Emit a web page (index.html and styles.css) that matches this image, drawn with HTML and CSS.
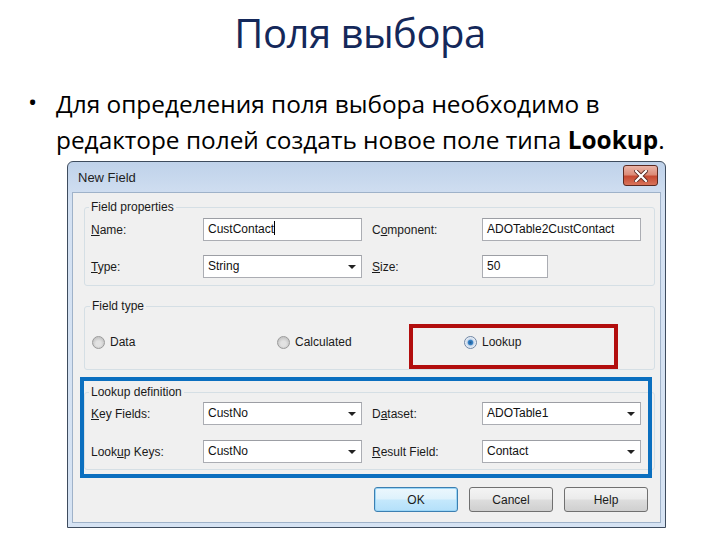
FILE: index.html
```html
<!DOCTYPE html>
<html lang="ru">
<head>
    <meta charset="UTF-8">
    <title>Поля выбора</title>
    <link rel="stylesheet" href="styles.css">
</head>
<body>
    <h1 class="slide-title">Поля выбора</h1>
    <ul class="points">
        <li class="point"><span class="dot">•</span><span class="point-text">Для определения поля выбора необходимо в<br>редакторе полей создать новое поле типа <b>Lookup</b>.</span></li>
    </ul>

    <div class="window">
        <div class="titlebar">
            <span class="caption">New Field</span>
            <span class="close">
                <svg width="14" height="12" viewBox="0 0 14 12">
                    <path d="M2 1 L12 11 M12 1 L2 11" stroke="#5a2a22" stroke-width="4" stroke-linecap="square"/>
                    <path d="M2 1 L12 11 M12 1 L2 11" stroke="#ffffff" stroke-width="2.2" stroke-linecap="square"/>
                </svg>
            </span>
        </div>
        <div class="client">
            <fieldset class="group props">
                <legend>Field properties</legend>
                <label><u>N</u>ame:</label>
                <div class="edit">CustContact<span class="caret"></span></div>
                <label>C<u>o</u>mponent:</label>
                <div class="edit">ADOTable2CustContact</div>
                <label><u>T</u>ype:</label>
                <div class="edit combo">String<span class="arrow"></span></div>
                <label><u>S</u>ize:</label>
                <div class="edit short">50</div>
            </fieldset>

            <fieldset class="group kind">
                <legend>Field type</legend>
                <div class="radio"><span class="knob"></span>Data</div>
                <div class="radio"><span class="knob"></span>Calculated</div>
                <div class="radio"><span class="knob on"></span>Lookup</div>
            </fieldset>

            <fieldset class="group props lookup">
                <legend>Lookup definition</legend>
                <label><u>K</u>ey Fields:</label>
                <div class="edit combo">CustNo<span class="arrow"></span></div>
                <label>D<u>a</u>taset:</label>
                <div class="edit combo">ADOTable1<span class="arrow"></span></div>
                <label>Look<u>u</u>p Keys:</label>
                <div class="edit combo">CustNo<span class="arrow"></span></div>
                <label><u>R</u>esult Field:</label>
                <div class="edit combo">Contact<span class="arrow"></span></div>
            </fieldset>

            <div class="actions">
                <button class="btn default">OK</button>
                <button class="btn">Cancel</button>
                <button class="btn">Help</button>
            </div>
        </div>

        <div class="mark mark-red"></div>
        <div class="mark mark-blue"></div>
    </div>
</body>
</html>
```

FILE: styles.css
```css
body {
    margin: 0;
    width: 720px;
    height: 540px;
    background: #ffffff;
    font-family: "Open Sans", "Noto Sans", sans-serif;
    overflow: hidden;
}
.slide-title {
    margin: 0;
    padding-top: 9px;
    font-size: 40px;
    font-weight: normal;
    line-height: 48px;
    text-align: center;
    color: #14285a;
    letter-spacing: -0.5px;
}
.points {
    list-style: none;
    margin: 27px 0 0;
    padding: 0 0 0 28px;
    height: 72px;
}
.point {
    display: flex;
    font-size: 24.4px;
    line-height: 36px;
    color: #000;
}
.point-text {
    white-space: nowrap;
    padding-top: 2px;
}
.point b {
    font-weight: bold;
}
.dot {
    flex: none;
    width: 28px;
}

/* dialog window */
.window {
    position: relative;
    box-sizing: border-box;
    margin: 5px 0 0 67px;
    width: 599px;
    height: 367px;
    border: 1px solid #3e4c5e;
    border-radius: 6px 6px 0 0;
    padding: 0 4px 4px;
    background: linear-gradient(#bfd2ea, #d4e1f2 40px, #d6e3f3);
    display: flex;
    flex-direction: column;
    font-family: "Liberation Sans", Arial, sans-serif;
    font-size: 12px;
    color: #1a1a1a;
}
.titlebar {
    height: 30px;
    flex: none;
    display: flex;
    justify-content: space-between;
    align-items: flex-start;
}
.caption {
    margin: 8px 0 0 6px;
    font-size: 13px;
    color: #1e1e1e;
}
.close {
    margin: 3px 3px 0 0;
    width: 33px;
    height: 19px;
    border: 1px solid #5b2a22;
    border-radius: 3px;
    background: linear-gradient(#eab4a8, #dc8c78 45%, #c64a32 55%, #d8735a);
    display: flex;
    align-items: center;
    justify-content: center;
}
.client {
    flex: 1;
    border: 1px solid #9fb2c9;
    background: #f0f0f0;
    display: flex;
    flex-direction: column;
    padding: 7px 5px 0 11px;
}
.group {
    margin: 0;
    border: 1px solid #d5dfe5;
    border-radius: 3px;
    padding: 4px 6px 7px;
}
.group legend {
    padding: 0 2px;
    margin-left: -2px;
    line-height: 14px;
}
.props {
    display: grid;
    grid-template-columns: 112px 169px 110px 158px;
    row-gap: 14px;
    align-items: center;
}
.kind {
    margin-top: 13px;
    padding: 21px 6px 19px 7px;
    display: grid;
    grid-template-columns: 185px 187px auto;
}
.lookup {
    margin-top: 15px;
    padding-top: 3px;
    padding-bottom: 6px;
    row-gap: 15px;
}
label u, .edit u {
    text-decoration: underline;
}
.edit {
    position: relative;
    box-sizing: border-box;
    width: 159px;
    height: 23px;
    border: 1px solid #abadb3;
    border-top-color: #9c9ea4;
    background: #fff;
    padding: 0 4px;
    line-height: 21px;
    color: #111;
}
.edit.short {
    width: 66px;
}
.caret {
    display: inline-block;
    width: 1px;
    height: 14px;
    background: #000;
    vertical-align: -2px;
}
.arrow {
    position: absolute;
    right: 5px;
    top: 9px;
    border-left: 4px solid transparent;
    border-right: 4px solid transparent;
    border-top: 4px solid #222;
}
.radio {
    display: flex;
    align-items: center;
    gap: 5px;
    height: 16px;
}
.knob {
    box-sizing: border-box;
    width: 13px;
    height: 13px;
    border-radius: 50%;
    border: 1px solid #9a9a9a;
    background: radial-gradient(circle at 50% 60%, #e2e2e2 30%, #c6c6c6 70%, #f4f4f4);
}
.knob.on {
    border-color: #6f86a4;
    background: radial-gradient(circle, #1f5a96 0, #3a86c8 30%, #c6d6ea 42%, #eef3f9 70%);
}
.actions {
    margin-top: 17px;
    display: flex;
    justify-content: flex-end;
    gap: 11px;
    padding-right: 7px;
}
.btn {
    width: 84px;
    height: 25px;
    border: 1px solid #707070;
    border-radius: 3px;
    background: linear-gradient(#f4f4f4, #ebebeb 48%, #dddddd 52%, #cfcfcf);
    font-family: "Liberation Sans", Arial, sans-serif;
    font-size: 12px;
    color: #1a1a1a;
    padding: 0;
}
.btn.default {
    border-color: #3c7fb1;
    background: linear-gradient(#ecf7fd, #ddf1fc 48%, #c4e8fc 52%, #b4e0fa);
    box-shadow: inset 0 0 0 1px #9bd6f7;
}

/* annotation frames drawn over the dialog */
.mark {
    position: absolute;
    box-sizing: border-box;
    border: 4px solid;
}
.mark-red {
    left: 341px;
    top: 162px;
    width: 209px;
    height: 45px;
    border-color: #b20e0e;
}
.mark-blue {
    left: 12px;
    top: 215px;
    width: 572px;
    height: 101px;
    border-color: #0b6fbf;
}
```
